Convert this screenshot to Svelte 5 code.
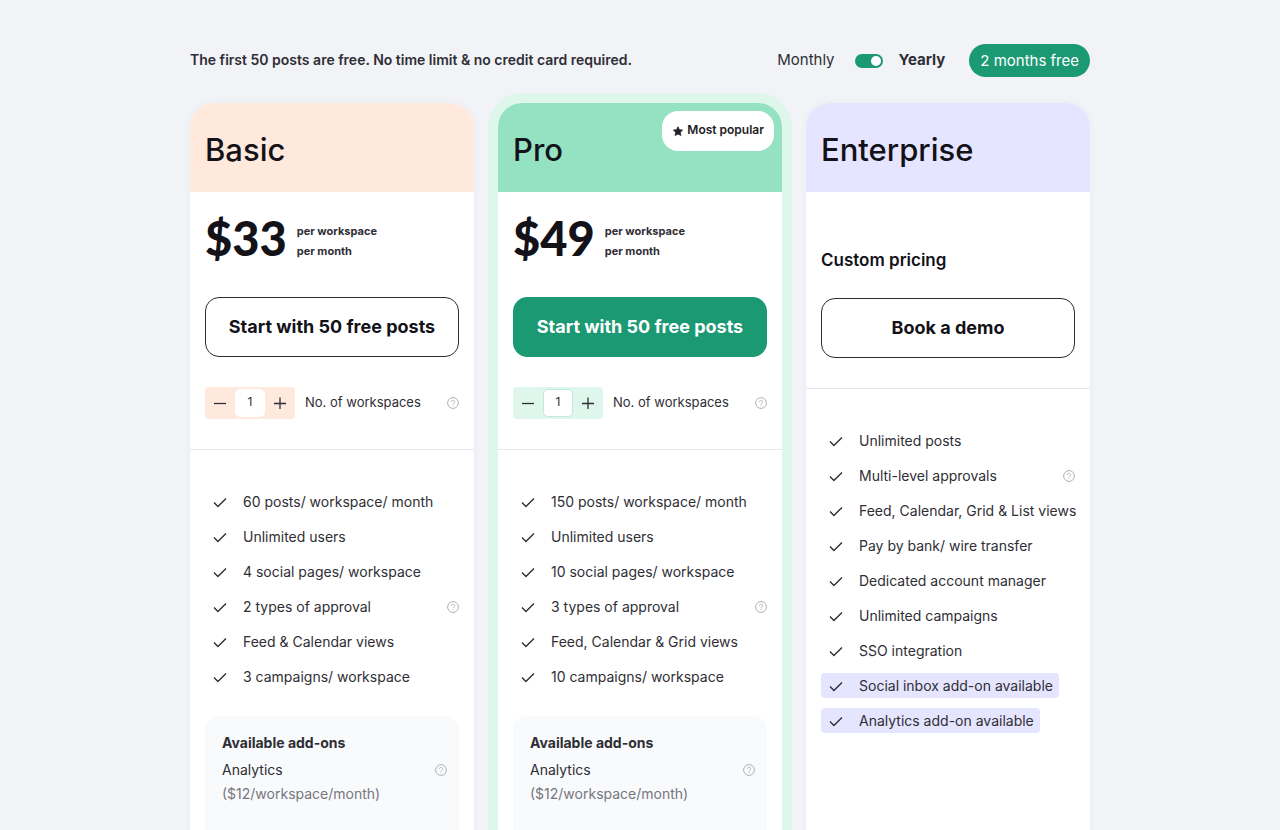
<script lang="ts">
	let yearly = $state(true);

	const plans = $state([
		{
			id: 'basic',
			name: 'Basic',
			price: '$33',
			cta: 'Start with 50 free posts',
			workspaces: 1,
			features: [
				{ text: '60 posts/ workspace/ month' },
				{ text: 'Unlimited users' },
				{ text: '4 social pages/ workspace' },
				{ text: '2 types of approval', help: true },
				{ text: 'Feed & Calendar views' },
				{ text: '3 campaigns/ workspace' }
			],
			addons: [{ name: 'Analytics', price: '($12/workspace/month)' }]
		},
		{
			id: 'pro',
			name: 'Pro',
			price: '$49',
			cta: 'Start with 50 free posts',
			popular: true,
			workspaces: 1,
			features: [
				{ text: '150 posts/ workspace/ month' },
				{ text: 'Unlimited users' },
				{ text: '10 social pages/ workspace' },
				{ text: '3 types of approval', help: true },
				{ text: 'Feed, Calendar & Grid views' },
				{ text: '10 campaigns/ workspace' }
			],
			addons: [{ name: 'Analytics', price: '($12/workspace/month)' }]
		},
		{
			id: 'enterprise',
			name: 'Enterprise',
			cta: 'Book a demo',
			workspaces: 0,
			features: [
				{ text: 'Unlimited posts' },
				{ text: 'Multi-level approvals', help: true },
				{ text: 'Feed, Calendar, Grid & List views' },
				{ text: 'Pay by bank/ wire transfer' },
				{ text: 'Dedicated account manager' },
				{ text: 'Unlimited campaigns' },
				{ text: 'SSO integration' },
				{ text: 'Social inbox add-on available', highlight: true },
				{ text: 'Analytics add-on available', highlight: true }
			],
			addons: []
		}
	]);
</script>

{#snippet help(label)}
	<button class="help" aria-label={label}>
		<svg viewBox="0 0 12 12" width="12" height="12" fill="none" stroke="currentColor">
			<circle cx="6" cy="6" r="5.4" />
			<path d="M4.3 4.9a1.7 1.5 0 1 1 2.6 1.2c-.6.4-.9.6-.9 1.2" stroke-width="0.9" />
			<path d="M6 8.2v.9" stroke-width="0.9" />
		</svg>
	</button>
{/snippet}

<main class="pricing">
	<div class="top-bar">
		<p class="intro">The first 50 posts are free. No time limit & no credit card required.</p>
		<div class="billing">
			<label for="billing-switch">Monthly</label>
			<input id="billing-switch" class="switch" type="checkbox" bind:checked={yearly} />
			<label for="billing-switch" class="yearly">Yearly</label>
			<span class="badge">2 months free</span>
		</div>
	</div>

	<div class="plans">
		{#each plans as plan}
			<section class="card {plan.id}">
				<header class="card-header">
					<h2>{plan.name}</h2>
					{#if plan.popular}
						<span class="popular">
							<svg viewBox="0 0 12 12" width="12" height="12">
								<path
									d="M6 1.8 7.4 4.7l3.2.4-2.3 2.2.6 3.2L6 9l-2.9 1.5.6-3.2-2.3-2.2 3.2-.4z"
									fill="currentColor"
									stroke="currentColor"
									stroke-width="0.8"
									stroke-linejoin="round"
								/>
							</svg>
							Most popular
						</span>
					{/if}
				</header>

				<div class="offer">
					{#if plan.price}
						<div class="price-row">
							<span class="price">{plan.price}</span>
							<span class="per">per workspace<br />per month</span>
						</div>
					{:else}
						<div class="price-row custom">Custom pricing</div>
					{/if}
					<button class="cta">{plan.cta}</button>
					{#if plan.price}
						<div class="workspaces">
							<div class="stepper">
								<button aria-label="Remove workspace" onclick={() => (plan.workspaces = Math.max(1, plan.workspaces - 1))}>
									<svg viewBox="0 0 12 12" width="12" height="12" stroke="currentColor" stroke-width="1.3"><path d="M0 6.5h12" /></svg>
								</button>
								<input id="count-{plan.id}" type="text" inputmode="numeric" bind:value={plan.workspaces} />
								<button aria-label="Add workspace" onclick={() => (plan.workspaces = Number(plan.workspaces) + 1)}>
									<svg viewBox="0 0 12 12" width="12" height="12" stroke="currentColor" stroke-width="1.3"><path d="M0 6.5h12M6 .5v12" /></svg>
								</button>
							</div>
							<label for="count-{plan.id}">No. of workspaces</label>
							{@render help('About workspaces')}
						</div>
					{/if}
				</div>

				<ul class="features">
					{#each plan.features as feature}
						<li>
							<span class="feature" class:highlight={feature.highlight}>
								<svg viewBox="0 0 14 12" width="14" height="12" fill="none" stroke="currentColor">
									<path d="M1 6.6 4.9 10.4 13 2.4" stroke-width="1.4" />
								</svg>
								{feature.text}
							</span>
							{#if feature.help}
								{@render help('About ' + feature.text)}
							{/if}
						</li>
					{/each}
				</ul>

				{#if plan.addons.length}
					<div class="addons">
						<h3>Available add-ons</h3>
						{#each plan.addons as addon}
							<div class="addon">
								<span>{addon.name}</span>
								{@render help('About ' + addon.name)}
							</div>
							<div class="addon-price">{addon.price}</div>
						{/each}
					</div>
				{/if}
			</section>
		{/each}
	</div>
</main>

<style>
	:global(body) {
		background: #f1f3f7;
	}

	.pricing {
		max-width: 900px;
		margin: 0 auto;
		padding: 44px 16px 48px;
		font-family: Inter, 'Liberation Sans', sans-serif;
		font-size: 14px;
		color: #2f2e35;
	}

	button,
	input {
		font-family: inherit;
		color: inherit;
		padding: 0;
		border: none;
	}

	button {
		background: none;
		cursor: pointer;
	}

	svg {
		display: block;
		flex: none;
	}

	.top-bar {
		display: flex;
		align-items: center;
		justify-content: space-between;
		margin-bottom: 26px;
	}

	.intro {
		margin: 0;
		padding-bottom: 2px;
		font-weight: 600;
	}

	.billing {
		display: flex;
		align-items: center;
		font-size: 15px;
	}

	.billing label {
		padding-bottom: 2px;
	}

	.switch {
		appearance: none;
		width: 28px;
		height: 14px;
		margin: 1px 16px 0 20px;
		padding: 2px;
		box-sizing: border-box;
		border-radius: 7px;
		background: #1b9973;
		cursor: pointer;
	}

	.switch::before {
		content: '';
		display: block;
		width: 10px;
		height: 10px;
		border-radius: 50%;
		background: #fff;
	}

	.switch:checked::before {
		margin-left: auto;
	}

	.yearly {
		font-weight: 700;
	}

	.badge {
		margin-left: 24px;
		padding: 0 11px;
		line-height: 33px;
		border-radius: 17px;
		background: #1b9973;
		color: #fff;
	}

	.plans {
		display: grid;
		grid-template-columns: repeat(3, minmax(0, 1fr));
		gap: 24px;
	}

	.card {
		padding-bottom: 32px;
		border-radius: 24px;
		background: #fff;
		box-shadow: 0 0 8px rgba(40, 40, 90, 0.03);
	}

	.pro {
		box-shadow: 0 0 0 10px #dff6ec;
	}

	.card-header {
		position: relative;
		padding: 28px 15px 23px;
		border-radius: 24px 24px 0 0;
	}

	.basic .card-header {
		background: #ffe9dd;
	}

	.pro .card-header {
		background: #94e2c2;
	}

	.enterprise .card-header {
		background: #e6e5ff;
	}

	h2 {
		margin: 0;
		font-size: 31px;
		line-height: 38px;
		font-weight: 500;
		color: #131218;
	}

	.popular {
		position: absolute;
		top: 8px;
		right: 8px;
		display: flex;
		align-items: center;
		gap: 3px;
		padding: 0 10px 2px;
		line-height: 38px;
		border-radius: 16px;
		background: #fff;
		color: #222126;
		font-size: 12px;
		font-weight: 600;
	}

	.popular svg {
		margin-top: 2px;
	}

	.offer {
		padding: 0 15px 30px;
		border-bottom: 1px solid #e5e6ea;
	}

	.price-row {
		display: flex;
		align-items: center;
		gap: 10px;
		height: 95px;
		margin-bottom: 10px;
	}

	.price {
		padding-bottom: 3px;
		font-family: Lato, Inter, sans-serif;
		font-size: 47px;
		font-weight: 900;
		color: #131218;
	}

	.per {
		padding-top: 2px;
		font-size: 11px;
		line-height: 20px;
		font-weight: 700;
	}

	.custom {
		align-items: flex-end;
		height: 96px;
		padding-bottom: 18px;
		box-sizing: border-box;
		font-size: 17px;
		font-weight: 600;
		color: #131218;
	}

	.cta {
		width: 100%;
		height: 60px;
		padding-bottom: 2px;
		border: 1px solid #2b2b30;
		border-radius: 14px;
		background: #fff;
		color: #131218;
		font-size: 18px;
		font-weight: 700;
	}

	.pro .cta {
		border-color: #1b9973;
		background: #1b9973;
		color: #fff;
	}

	.workspaces {
		display: flex;
		align-items: center;
		gap: 10px;
		margin-top: 30px;
	}

	.workspaces label {
		padding-bottom: 3px;
		font-size: 13px;
	}

	.stepper {
		display: flex;
		align-items: center;
		height: 32px;
		border-radius: 4px;
		background: #ffe9dd;
	}

	.pro .stepper {
		background: #dff6ec;
	}

	.stepper button {
		display: grid;
		place-items: center;
		width: 30px;
		height: 32px;
	}

	.stepper input {
		width: 30px;
		height: 28px;
		padding-bottom: 3px;
		box-sizing: border-box;
		border: 1px solid #fff;
		border-radius: 5px;
		background: #fff;
		font-size: 12px;
		text-align: center;
	}

	.pro .stepper input {
		border-color: #c0ebd9;
	}

	.help {
		margin-left: auto;
		color: #b0b0b7;
	}

	.features {
		display: flex;
		flex-direction: column;
		gap: 10px;
		margin: 0;
		padding: 39px 15px 27px;
		list-style: none;
	}

	.features li {
		display: flex;
		align-items: center;
	}

	.feature {
		display: flex;
		align-items: center;
		gap: 16px;
		padding: 0 6px 0 8px;
		line-height: 25px;
		border-radius: 4px;
		white-space: nowrap;
	}

	.highlight {
		background: #e6e5ff;
	}

	.addons {
		margin: 0 15px;
		padding: 15px 12px 48px 17px;
		border-radius: 14px;
		background: #f8fafc;
		line-height: 24px;
	}

	h3 {
		margin: 0 0 3px;
		font-size: 14px;
		font-weight: 700;
	}

	.addon {
		display: flex;
		align-items: center;
	}

	.addon-price {
		color: #77767e;
	}

	@media (max-width: 860px) {
		.top-bar {
			flex-direction: column;
			gap: 16px;
		}

		.plans {
			grid-template-columns: 1fr;
		}
	}
</style>
